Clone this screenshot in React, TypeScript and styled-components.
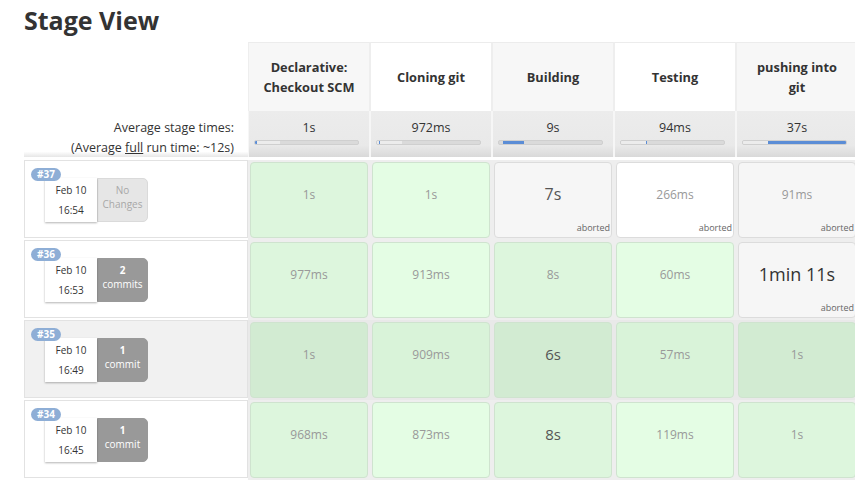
import React from "react";
import styled, { createGlobalStyle } from "styled-components";

const GlobalStyle = createGlobalStyle`
  body {
    margin: 0;
    background: #fff;
    font-family: "Open Sans", "Liberation Sans", sans-serif;
    color: #333;
    overflow: hidden;
  }
`;

type Stage = {
  name: string[];
  avg: string;
  light: number;
  blueLeft: number;
  blueWidth: number;
};

type Cell = {
  time: string;
  status: "ok" | "aborted";
  size?: number;
};

type Run = {
  id: number;
  date: string;
  time: string;
  changes: string[] | null;
  hover?: boolean;
  cells: Cell[];
};

const stages: Stage[] = [
  { name: ["Declarative:", "Checkout SCM"], avg: "1s", light: 24, blueLeft: 0, blueWidth: 2 },
  { name: ["Cloning git"], avg: "972ms", light: 24, blueLeft: 2, blueWidth: 1 },
  { name: ["Building"], avg: "9s", light: 0, blueLeft: 4, blueWidth: 20 },
  { name: ["Testing"], avg: "94ms", light: 24, blueLeft: 24, blueWidth: 1 },
  { name: ["pushing into", "git"], avg: "37s", light: 24, blueLeft: 24, blueWidth: 76 },
];

const runs: Run[] = [
  {
    id: 37,
    date: "Feb 10",
    time: "16:54",
    changes: null,
    cells: [
      { time: "1s", status: "ok" },
      { time: "1s", status: "ok" },
      { time: "7s", status: "aborted", size: 16 },
      { time: "266ms", status: "aborted" },
      { time: "91ms", status: "aborted" },
    ],
  },
  {
    id: 36,
    date: "Feb 10",
    time: "16:53",
    changes: ["2", "commits"],
    cells: [
      { time: "977ms", status: "ok" },
      { time: "913ms", status: "ok" },
      { time: "8s", status: "ok" },
      { time: "60ms", status: "ok" },
      { time: "1min 11s", status: "aborted", size: 18 },
    ],
  },
  {
    id: 35,
    date: "Feb 10",
    time: "16:49",
    changes: ["1", "commit"],
    hover: true,
    cells: [
      { time: "1s", status: "ok" },
      { time: "909ms", status: "ok" },
      { time: "6s", status: "ok", size: 15 },
      { time: "57ms", status: "ok" },
      { time: "1s", status: "ok" },
    ],
  },
  {
    id: 34,
    date: "Feb 10",
    time: "16:45",
    changes: ["1", "commit"],
    cells: [
      { time: "968ms", status: "ok" },
      { time: "873ms", status: "ok" },
      { time: "8s", status: "ok", size: 15 },
      { time: "119ms", status: "ok" },
      { time: "1s", status: "ok" },
    ],
  },
];

function boxColor(cell: Cell, col: number, hover?: boolean) {
  const odd = col % 2 === 0;
  if (cell.status === "aborted") return odd ? "#f6f6f6" : "#ffffff";
  if (hover) return odd ? "#d2ebd2" : "#d9f3d9";
  return odd ? "#ddf6dd" : "#e4fde4";
}

export default function App() {
  return (
    <S.Page>
      <GlobalStyle />
      <S.Title>Stage View</S.Title>
      <S.Grid>
        <S.Corner />
        {stages.map((s, i) => (
          <S.StageHead key={s.avg + i} $alt={i % 2 === 1}>
            <div>
              {s.name.map((n) => (
                <div key={n}>{n}</div>
              ))}
            </div>
          </S.StageHead>
        ))}

        <S.AvgLabel>
          <div>Average stage times:</div>
          <div>
            (Average <u>full</u> run time: ~12s)
          </div>
        </S.AvgLabel>
        {stages.map((s, i) => (
          <S.AvgCell key={"a" + i}>
            <div>{s.avg}</div>
            <S.Bar>
              <S.BarLight style={{ width: s.light + "%" }} />
              <S.BarFill style={{ left: s.blueLeft + "%", width: s.blueWidth + "%" }} />
            </S.Bar>
          </S.AvgCell>
        ))}
      </S.Grid>

      <S.Body>
        {runs.map((r) => (
          <S.Row key={r.id}>
            <S.RunCell $hover={r.hover}>
              <S.Badge>#{r.id}</S.Badge>
              <S.DateBox>
                <div>{r.date}</div>
                <div>{r.time}</div>
              </S.DateBox>
              {r.changes ? (
                <S.Changes $empty={false}>
                  <b>{r.changes[0]}</b>
                  <div>{r.changes[1]}</div>
                </S.Changes>
              ) : (
                <S.Changes $empty>
                  <div>No</div>
                  <div>Changes</div>
                </S.Changes>
              )}
            </S.RunCell>
            {r.cells.map((c, i) => (
              <S.StageCell key={i} $hover={r.hover}>
                <S.StageBox
                  $bg={boxColor(c, i, r.hover)}
                  $aborted={c.status === "aborted"}
                >
                  <S.Duration $size={c.size}>{c.time}</S.Duration>
                  <S.Footer>{c.status === "aborted" ? "aborted" : ""}</S.Footer>
                </S.StageBox>
              </S.StageCell>
            ))}
          </S.Row>
        ))}
      </S.Body>
    </S.Page>
  );
}

const S = {
  Page: styled.div`
    padding: 6px 0 0 24px;
    width: 100vw;
    height: 100vh;
    box-sizing: border-box;
    overflow: hidden;
  `,
  Title: styled.h2`
    margin: 0;
    font-size: 25px;
    line-height: 28px;
    font-weight: 700;
    color: #333;
  `,
  Grid: styled.div`
    display: grid;
    grid-template-columns: 224px repeat(5, 122px);
    grid-template-rows: 69px 46px;
    margin-top: 8px;
  `,
  Corner: styled.div`
    background: #fff;
  `,
  StageHead: styled.div<{ $alt: boolean }>`
    display: flex;
    align-items: center;
    justify-content: center;
    text-align: center;
    background: ${(p) => (p.$alt ? "#ffffff" : "#f7f7f7")};
    border-top: 1px solid #ececec;
    border-left: 1px solid #eeeeee;
    border-right: 1px solid #eeeeee;
    box-sizing: border-box;
    font-size: 12.8px;
    font-weight: 700;
    line-height: 20px;
    color: #333;
    padding: 0 6px;
  `,
  AvgLabel: styled.div`
    text-align: right;
    padding: 7px 14px 0 0;
    font-size: 12.5px;
    line-height: 20px;
    color: #333;
    background: linear-gradient(#ffffff 88%, #e6e6e6);
    u {
      text-decoration: underline;
    }
  `,
  AvgCell: styled.div`
    background: linear-gradient(#ececec 0%, #e9e9e9 75%, #d9d9d9 100%);
    border-left: 1px solid #f6f6f6;
    border-right: 1px solid #f6f6f6;
    box-sizing: border-box;
    text-align: center;
    padding-top: 7px;
    font-size: 12.5px;
    line-height: 20px;
    color: #333;
  `,
  Bar: styled.div`
    position: relative;
    height: 5px;
    margin: 2px 10px 0 5px;
    background: #dadada;
    border: 1px solid #cfcfcf;
    border-radius: 2px;
    box-sizing: border-box;
    overflow: hidden;
  `,
  BarLight: styled.div`
    position: absolute;
    left: 0;
    top: 0;
    bottom: 0;
    background: #ececec;
  `,
  BarFill: styled.div`
    position: absolute;
    top: 0;
    bottom: 0;
    min-width: 1px;
    background: #5b8dd6;
  `,
  Body: styled.div`
    margin-top: 3px;
  `,
  Row: styled.div`
    display: grid;
    grid-template-columns: 224px repeat(5, 122px);
    height: 80px;
  `,
  RunCell: styled.div<{ $hover?: boolean }>`
    position: relative;
    height: 78px;
    box-sizing: border-box;
    border: 1px solid #e2e2e2;
    background: ${(p) => (p.$hover ? "#f1f1f1" : "#ffffff")};
    display: flex;
    align-items: flex-start;
    padding: 17px 0 0 20px;
  `,
  Badge: styled.div`
    position: absolute;
    left: 6px;
    top: 7px;
    z-index: 2;
    width: 30px;
    height: 13px;
    border-radius: 7px;
    background: #8eaed6;
    color: #fff;
    font-size: 10px;
    font-weight: 700;
    line-height: 13px;
    text-align: center;
  `,
  DateBox: styled.div`
    position: relative;
    z-index: 1;
    width: 52px;
    height: 44px;
    box-sizing: border-box;
    padding-top: 2px;
    background: #fff;
    box-shadow: 0 1px 2px rgba(0, 0, 0, 0.3);
    text-align: center;
    font-size: 10px;
    line-height: 20px;
    color: #333;
  `,
  Changes: styled.div<{ $empty: boolean }>`
    width: 51px;
    height: 44px;
    box-sizing: border-box;
    padding-top: 4px;
    border-radius: 0 5px 5px 0;
    background: ${(p) => (p.$empty ? "#e6e6e6" : "#999999")};
    border: 1px solid ${(p) => (p.$empty ? "#dadada" : "#999999")};
    color: ${(p) => (p.$empty ? "#a8a8a8" : "#ffffff")};
    text-align: center;
    font-size: 10px;
    line-height: 14px;
    b {
      display: block;
      font-weight: 700;
    }
  `,
  StageCell: styled.div<{ $hover?: boolean }>`
    padding: 2px;
    box-sizing: border-box;
    height: 80px;
    background: ${(p) => (p.$hover ? "#e9e9e9" : "#eeeeee")};
  `,
  StageBox: styled.div<{ $bg: string; $aborted: boolean }>`
    height: 76px;
    box-sizing: border-box;
    display: flex;
    flex-direction: column;
    background: ${(p) => p.$bg};
    border: 1px solid ${(p) => (p.$aborted ? "#dcdcdc" : "#cfe3cf")};
    border-radius: 4px;
  `,
  Duration: styled.div<{ $size?: number }>`
    flex: 1;
    display: flex;
    align-items: center;
    justify-content: center;
    padding-top: 3px;
    font-size: ${(p) => (p.$size ? p.$size + "px" : "12px")};
    color: ${(p) => (p.$size ? (p.$size > 16 ? "#333" : "#555") : "#999")};
  `,
  Footer: styled.div`
    height: 15px;
    line-height: 12px;
    text-align: right;
    padding-right: 1px;
    font-size: 9px;
    color: #666;
  `,
};
